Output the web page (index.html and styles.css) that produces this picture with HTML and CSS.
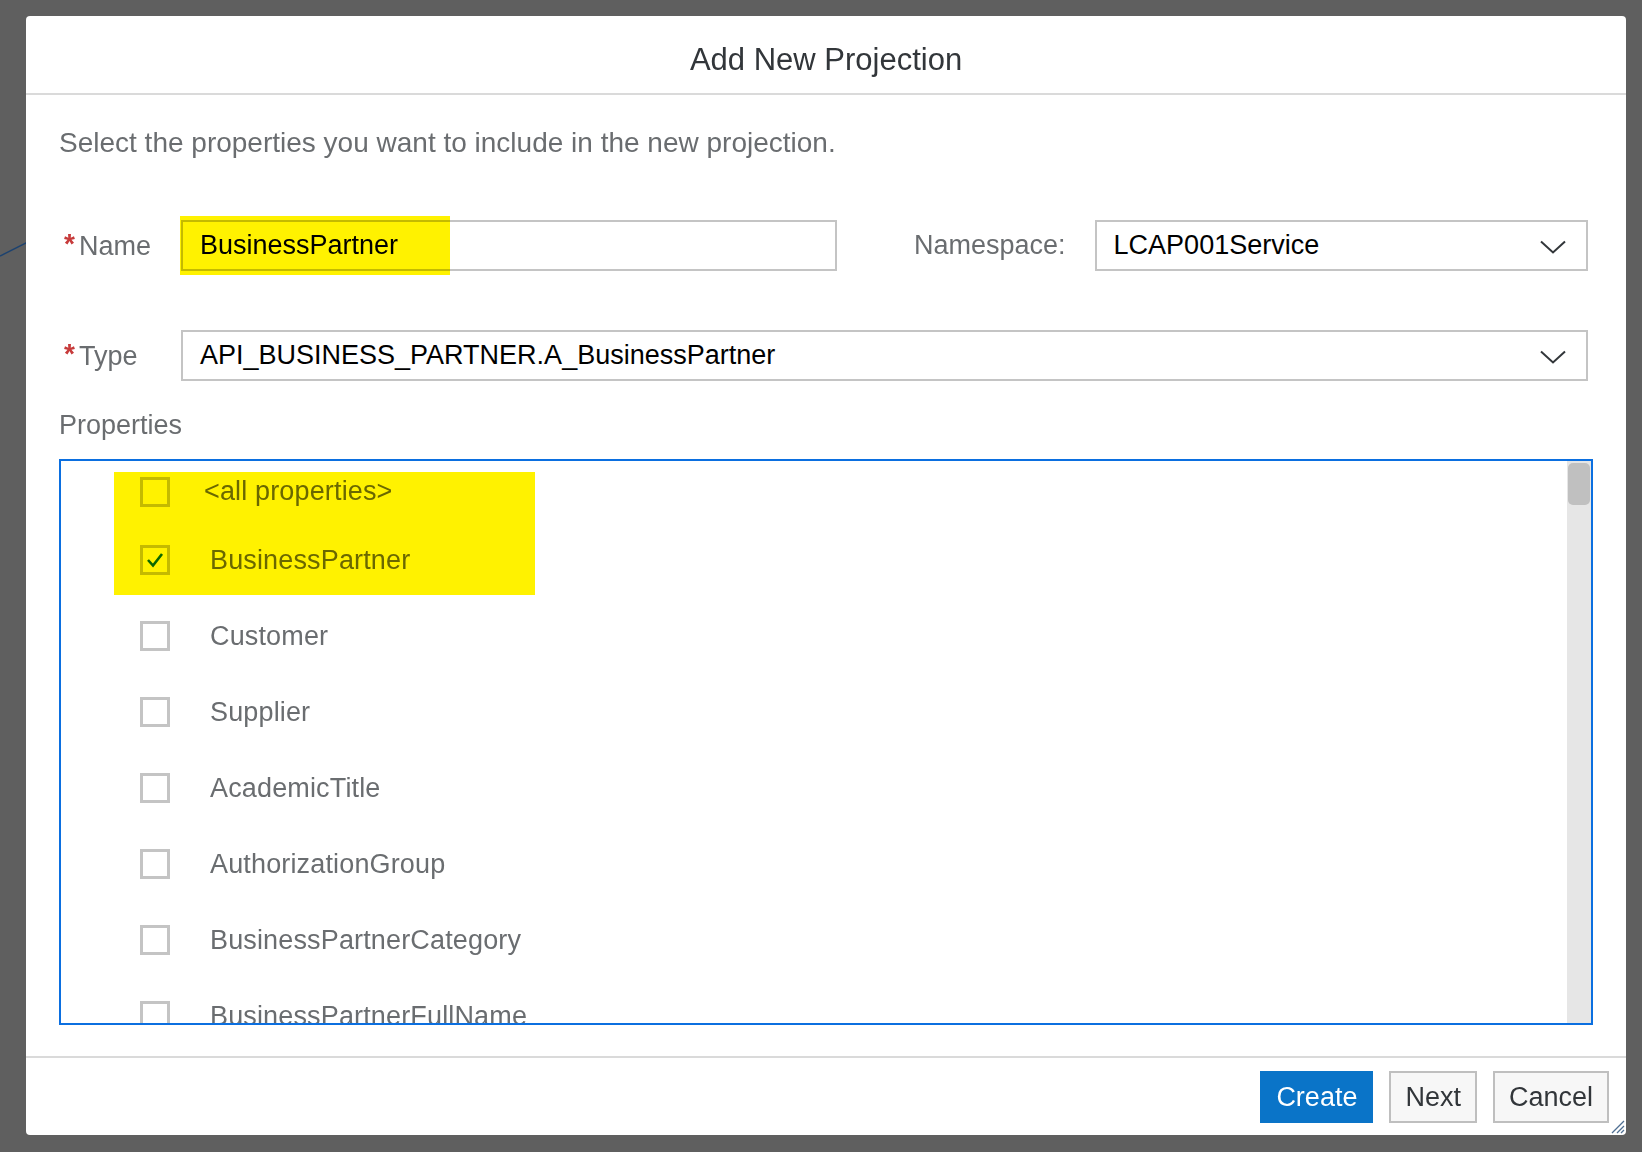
FILE: index.html
```html
<!DOCTYPE html>
<html lang="en">
<head>
<meta charset="utf-8">
<title>Add New Projection</title>
<link rel="stylesheet" href="styles.css">
</head>
<body>
<div class="stage">
  <svg class="bg-line" width="40" height="40" viewBox="0 0 40 40"><path d="M0 28 L40 8" stroke="#1d4370" stroke-width="1.5" fill="none"/></svg>
  <div class="dialog">
    <header class="dialog-header"><h1 class="title">Add New Projection</h1></header>
    <main class="dialog-body">
      <p class="subtitle">Select the properties you want to include in the new projection.</p>
      <div class="form-row row-name">
        <label class="label"><span class="req">*</span>Name</label>
        <div class="input name-input">
          <span class="value">BusinessPartner</span>
          <span class="hl hl-name"></span>
        </div>
        <label class="ns-label">Namespace:</label>
        <div class="input select ns-select">
          <span class="value">LCAP001Service</span>
          <svg class="chev" width="26" height="14" viewBox="0 0 26 14"><path d="M1 1.5 L13 12.5 L25 1.5" stroke="#32363a" stroke-width="2" fill="none"/></svg>
        </div>
      </div>
      <div class="form-row row-type">
        <label class="label"><span class="req">*</span>Type</label>
        <div class="input select type-select">
          <span class="value">API_BUSINESS_PARTNER.A_BusinessPartner</span>
          <svg class="chev" width="26" height="14" viewBox="0 0 26 14"><path d="M1 1.5 L13 12.5 L25 1.5" stroke="#32363a" stroke-width="2" fill="none"/></svg>
        </div>
      </div>
      <div class="props-label">Properties</div>
      <div class="list">
        <div class="list-rows">
          <div class="row row-first"><span class="cb"></span><span class="item item-all">&lt;all properties&gt;</span></div>
          <div class="row"><span class="cb cb-checked"><svg width="20" height="18" viewBox="0 0 20 18"><path d="M3 9 L8 14.5 L17 3" stroke="#0a6ed1" stroke-width="2.6" fill="none"/></svg></span><span class="item">BusinessPartner</span></div>
          <div class="row"><span class="cb"></span><span class="item">Customer</span></div>
          <div class="row"><span class="cb"></span><span class="item">Supplier</span></div>
          <div class="row"><span class="cb"></span><span class="item">AcademicTitle</span></div>
          <div class="row"><span class="cb"></span><span class="item">AuthorizationGroup</span></div>
          <div class="row"><span class="cb"></span><span class="item">BusinessPartnerCategory</span></div>
          <div class="row"><span class="cb"></span><span class="item">BusinessPartnerFullName</span></div>
        </div>
        <div class="scrollbar"><div class="thumb"></div></div>
        <span class="hl hl-list"></span>
      </div>
    </main>
    <footer class="dialog-footer">
      <button class="btn btn-primary">Create</button>
      <button class="btn">Next</button>
      <button class="btn">Cancel</button>
    </footer>
    <svg class="grip" width="16" height="16" viewBox="0 0 16 16"><path d="M15 3 L3 15 M15 8 L8 15 M15 12 L12 15" stroke="#4f6f92" stroke-width="1.3" fill="none"/></svg>
  </div>
</div>
</body>
</html>
```

FILE: styles.css
```css
* { box-sizing: border-box; }
html, body {
  margin: 0;
  padding: 0;
  width: 1642px;
  height: 1152px;
  overflow: hidden;
  background: #5f5f5f;
  font-family: "Liberation Sans", Arial, sans-serif;
}
.stage {
  position: relative;
  padding: 16px 16px 0 26px;
}
.bg-line {
  position: absolute;
  left: 0;
  top: 228px;
}
.dialog {
  position: relative;
  width: 1600px;
  height: 1119px;
  background: #fff;
  border-radius: 4px;
  display: flex;
  flex-direction: column;
}
.dialog-header {
  height: 79px;
  flex: none;
  border-bottom: 2px solid #dadada;
  display: flex;
  align-items: center;
  justify-content: center;
  padding-top: 10px;
}
.title {
  margin: 0;
  font-weight: normal;
  font-size: 31px;
  color: #32363a;
}
.dialog-body {
  flex: 1;
  padding: 0 33px;
  display: flex;
  flex-direction: column;
}
.subtitle {
  margin: 32px 0 0 0;
  font-size: 28px;
  line-height: 32px;
  color: #6a6d70;
}
.form-row {
  display: flex;
  align-items: center;
  height: 51px;
}
.row-name { margin-top: 61px; }
.row-type { margin-top: 59px; }
.label {
  width: 122px;
  flex: none;
  font-size: 27px;
  color: #6a6d70;
  padding-left: 5px;
  display: flex;
  align-items: baseline;
}
.req {
  color: #c73b3b;
  font-size: 28px;
  margin-right: 4px;
  position: relative;
  top: -2px;
  font-weight: bold;
}
.input {
  position: relative;
  height: 51px;
  border: 2px solid #c4c4c4;
  background: #fff;
  display: flex;
  align-items: center;
  padding: 0 20px 0 17px;
}
.value {
  font-size: 27px;
  color: #000;
}
.name-input { width: 656px; flex: none; }
.ns-label {
  margin: 0 29px 0 77px;
  font-size: 27px;
  color: #6a6d70;
}
.select {
  flex: 1;
  margin-right: 5px;
  justify-content: space-between;
}
.chev { flex: none; margin-top: 2px; }
.props-label {
  margin-top: 28px;
  font-size: 27px;
  line-height: 32px;
  color: #6a6d70;
}
.list {
  position: relative;
  margin-top: 18px;
  height: 566px;
  border: 2px solid #0b6fe0;
  overflow: hidden;
  display: flex;
}
.list-rows {
  flex: 1;
  padding-left: 79px;
}
.row {
  height: 76px;
  display: flex;
  align-items: center;
}
.row-first { height: 61px; }
.cb {
  width: 30px;
  height: 30px;
  flex: none;
  border: 3px solid #c4c4c4;
  background: #fff;
  display: flex;
  align-items: center;
  justify-content: center;
}
.item {
  margin-left: 40px;
  font-size: 27px;
  letter-spacing: 0.15px;
  color: #6a6d70;
}
.item-all { margin-left: 34px; }
.scrollbar {
  width: 24px;
  flex: none;
  background: #e6e6e6;
  height: 100%;
}
.thumb {
  height: 42px;
  margin: 2px 1px 0 1px;
  border-radius: 5px;
  background: #c0c0c0;
}
.hl {
  position: absolute;
  background: #fff200;
  mix-blend-mode: multiply;
  pointer-events: none;
}
.hl-name {
  left: -3px;
  top: -6px;
  width: 270px;
  height: 59px;
}
.hl-list {
  left: 53px;
  top: 11px;
  width: 421px;
  height: 123px;
}
.dialog-footer {
  height: 79px;
  flex: none;
  border-top: 2px solid #dadada;
  display: flex;
  justify-content: flex-end;
  align-items: flex-start;
  gap: 16px;
  padding: 13px 17px 0 0;
}
.btn {
  height: 52px;
  padding: 0 14px;
  border: 2px solid #bfbfbf;
  background: #f7f7f7;
  color: #32363a;
  font-family: "Liberation Sans", Arial, sans-serif;
  font-size: 27px;
  border-radius: 0;
}
.btn-primary {
  background: #0a74c8;
  border-color: #0a74c8;
  color: #fff;
}
.grip {
  position: absolute;
  right: 1px;
  bottom: 1px;
}
```
